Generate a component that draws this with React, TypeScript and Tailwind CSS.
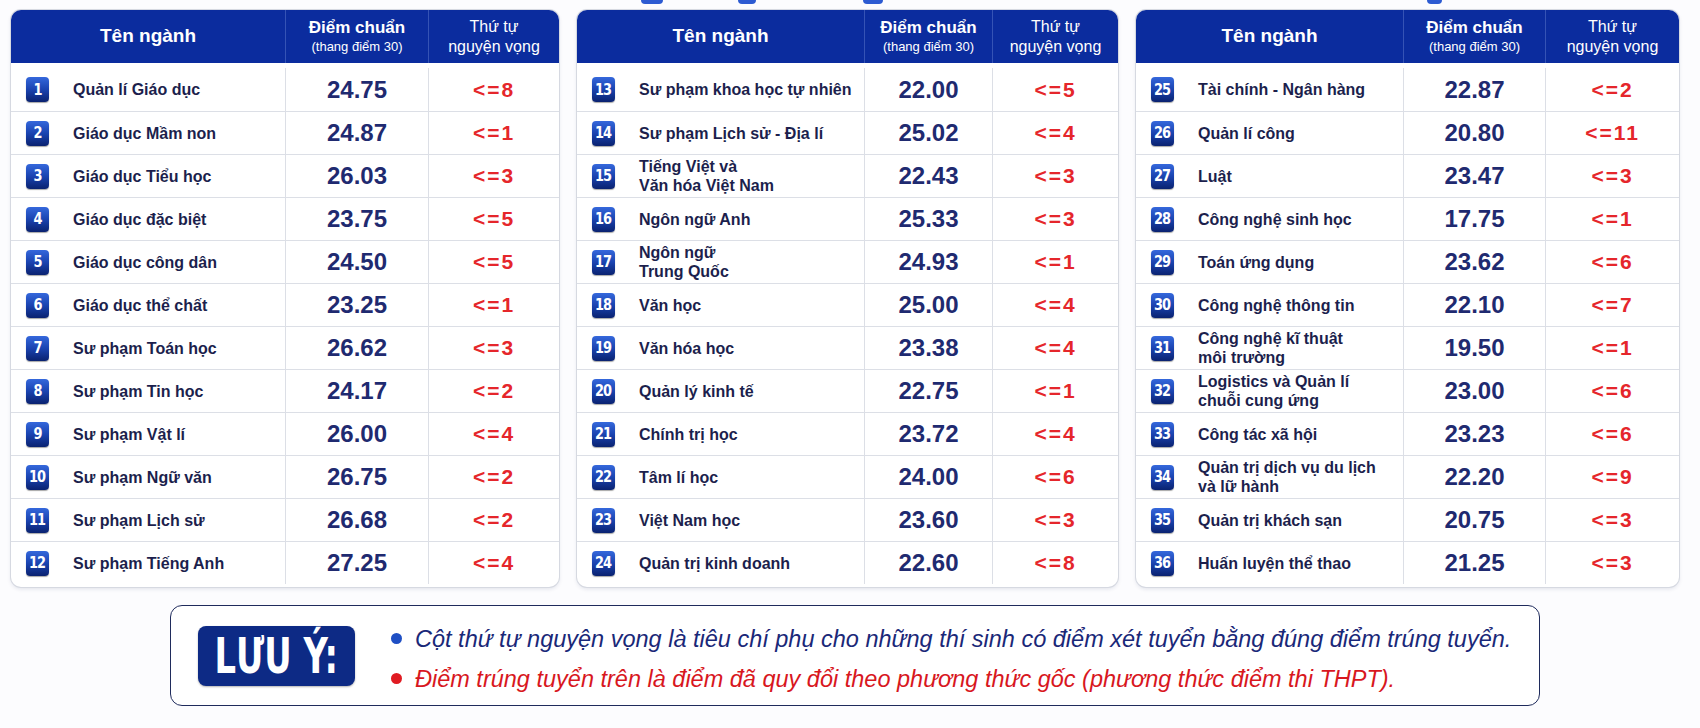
import React from "react";

type Row = { no: number; name: string[]; score: string; order: number };

const table1: Row[] = [
  { no: 1, name: ["Quản lí Giáo dục"], score: "24.75", order: 8 },
  { no: 2, name: ["Giáo dục Mầm non"], score: "24.87", order: 1 },
  { no: 3, name: ["Giáo dục Tiểu học"], score: "26.03", order: 3 },
  { no: 4, name: ["Giáo dục đặc biệt"], score: "23.75", order: 5 },
  { no: 5, name: ["Giáo dục công dân"], score: "24.50", order: 5 },
  { no: 6, name: ["Giáo dục thể chất"], score: "23.25", order: 1 },
  { no: 7, name: ["Sư phạm Toán học"], score: "26.62", order: 3 },
  { no: 8, name: ["Sư phạm Tin học"], score: "24.17", order: 2 },
  { no: 9, name: ["Sư phạm Vật lí"], score: "26.00", order: 4 },
  { no: 10, name: ["Sư phạm Ngữ văn"], score: "26.75", order: 2 },
  { no: 11, name: ["Sư phạm Lịch sử"], score: "26.68", order: 2 },
  { no: 12, name: ["Sư phạm Tiếng Anh"], score: "27.25", order: 4 },
];

const table2: Row[] = [
  { no: 13, name: ["Sư phạm khoa học tự nhiên"], score: "22.00", order: 5 },
  { no: 14, name: ["Sư phạm Lịch sử - Địa lí"], score: "25.02", order: 4 },
  { no: 15, name: ["Tiếng Việt và", "Văn hóa Việt Nam"], score: "22.43", order: 3 },
  { no: 16, name: ["Ngôn ngữ Anh"], score: "25.33", order: 3 },
  { no: 17, name: ["Ngôn ngữ", "Trung Quốc"], score: "24.93", order: 1 },
  { no: 18, name: ["Văn học"], score: "25.00", order: 4 },
  { no: 19, name: ["Văn hóa học"], score: "23.38", order: 4 },
  { no: 20, name: ["Quản lý kinh tế"], score: "22.75", order: 1 },
  { no: 21, name: ["Chính trị học"], score: "23.72", order: 4 },
  { no: 22, name: ["Tâm lí học"], score: "24.00", order: 6 },
  { no: 23, name: ["Việt Nam học"], score: "23.60", order: 3 },
  { no: 24, name: ["Quản trị kinh doanh"], score: "22.60", order: 8 },
];

const table3: Row[] = [
  { no: 25, name: ["Tài chính - Ngân hàng"], score: "22.87", order: 2 },
  { no: 26, name: ["Quản lí công"], score: "20.80", order: 11 },
  { no: 27, name: ["Luật"], score: "23.47", order: 3 },
  { no: 28, name: ["Công nghệ sinh học"], score: "17.75", order: 1 },
  { no: 29, name: ["Toán ứng dụng"], score: "23.62", order: 6 },
  { no: 30, name: ["Công nghệ thông tin"], score: "22.10", order: 7 },
  { no: 31, name: ["Công nghệ kĩ thuật", "môi trường"], score: "19.50", order: 1 },
  { no: 32, name: ["Logistics và Quản lí", "chuỗi cung ứng"], score: "23.00", order: 6 },
  { no: 33, name: ["Công tác xã hội"], score: "23.23", order: 6 },
  { no: 34, name: ["Quản trị dịch vụ du lịch", "và lữ hành"], score: "22.20", order: 9 },
  { no: 35, name: ["Quản trị khách sạn"], score: "20.75", order: 3 },
  { no: 36, name: ["Huấn luyện thể thao"], score: "21.25", order: 3 },
];

// column widths differ a bit between the three tables
const layouts = [
  { table: "w-[548px]", name: "w-[275px]", score: "w-[143px]" },
  { table: "w-[541px]", name: "w-[288px]", score: "w-[128px]" },
  { table: "w-[543px]", name: "w-[268px]", score: "w-[142px]" },
];

function NumberBadge({ no }: { no: number }) {
  return (
    <div className="w-[23px] h-[25px] shrink-0 rounded-[4px] bg-linear-to-b from-[#3568dc] via-[#1a43b0] to-[#0a2270] shadow-[0_1px_1px_rgba(0,0,0,0.35)] flex items-center justify-center">
      <span className="font-['DejaVu_Sans_Condensed',sans-serif] font-bold text-white text-[16px] leading-none tracking-[-1px] scale-x-90">
        {no}
      </span>
    </div>
  );
}

function ScoreTable({ rows, layout }: { rows: Row[]; layout: (typeof layouts)[number] }) {
  return (
    <div className={`${layout.table} rounded-[10px] bg-white overflow-hidden shadow-[0_0_0_1px_#d6d9e1,0_2px_4px_rgba(20,30,80,0.12)]`}>
      {/* Header */}
      <div className="flex h-[53px] bg-[#0b2c9e] text-white">
        <div className={`${layout.name} flex items-center justify-center border-r border-[#3553b5] text-[19px] font-bold`}>
          Tên ngành
        </div>
        <div className={`${layout.score} flex flex-col items-center justify-center border-r border-[#3553b5]`}>
          <span className="text-[17px] font-bold leading-[21px]">Điểm chuẩn</span>
          <span className="text-[13px] leading-[18px]">(thang điểm 30)</span>
        </div>
        <div className="flex-1 flex flex-col items-center justify-center">
          <span className="text-[16px] leading-[21px]">Thứ tự</span>
          <span className="text-[16px] leading-[20px]">nguyện vọng</span>
        </div>
      </div>

      {/* Rows */}
      {rows.map((r, i) => {
        const first = i === 0;
        const last = i === rows.length - 1;
        const h = first ? "h-[48px] pt-[5px]" : last ? "h-[46px] pb-[3px] border-t" : "h-[43px] border-t";
        return (
          <div key={r.no} className={`flex ${h} border-[#dcdfe6]`}>
            <div className={`${layout.name} flex items-center pl-[15px] border-r border-[#dcdfe6]`}>
              <NumberBadge no={r.no} />
              <div className="ml-[24px] text-[16px] font-bold text-[#1c1f4d] leading-[19px] whitespace-nowrap">
                {r.name.map((line) => (
                  <div key={line}>{line}</div>
                ))}
              </div>
            </div>
            <div className={`${layout.score} flex items-center justify-center border-r border-[#dcdfe6] text-[24px] font-bold text-[#1f2a70]`}>
              {r.score}
            </div>
            <div className="flex-1 flex items-center justify-center text-[21px] font-bold text-[#e5262b] tracking-[2px]">
              {"<=" + r.order}
            </div>
          </div>
        );
      })}
    </div>
  );
}

export default function App() {
  return (
    <div className="relative w-[1700px] h-[728px] overflow-hidden bg-[#fcfcfe] font-['Liberation_Sans',Arial,sans-serif]">
      {/* remnants of the heading cut off above */}
      <div className="absolute top-0 left-[641px] w-[22px] h-[4px] rounded-b-full bg-[#2d5bd2]" />
      <div className="absolute top-0 left-[738px] w-[18px] h-[4px] rounded-b-full bg-[#2d5bd2]" />
      <div className="absolute top-0 left-[863px] w-[20px] h-[4px] rounded-b-full bg-[#2d5bd2]" />
      <div className="absolute top-0 left-[1427px] w-[15px] h-[4px] rounded-b-full bg-[#2d5bd2]" />

      <div className="flex gap-[18px] pl-[11px] pt-[10px]">
        <ScoreTable rows={table1} layout={layouts[0]} />
        <ScoreTable rows={table2} layout={layouts[1]} />
        <ScoreTable rows={table3} layout={layouts[2]} />
      </div>

      {/* Note */}
      <div className="ml-[170px] mt-[18px] w-[1370px] h-[101px] rounded-[12px] border-[1.5px] border-[#1f2b5c] bg-white flex items-center">
        <div className="ml-[27px] w-[157px] h-[60px] rounded-[8px] bg-[#0d2a85] flex items-center justify-center shadow-[0_1px_2px_rgba(0,0,0,0.3)]">
          <span className="font-['DejaVu_Sans_Condensed',sans-serif] font-bold text-white text-[50px] leading-none scale-x-75 whitespace-nowrap">
            LƯU Ý:
          </span>
        </div>
        <div className="ml-[36px] flex flex-col gap-[10px] pt-[6px] italic text-[23.5px] leading-[30px]">
          <div className="flex items-center">
            <span className="w-[11px] h-[11px] rounded-full bg-[#1f4fc4]" />
            <span className="ml-[13px] text-[#1a2878]">
              Cột thứ tự nguyện vọng là tiêu chí phụ cho những thí sinh có điểm xét tuyển bằng đúng điểm trúng tuyển.
            </span>
          </div>
          <div className="flex items-center">
            <span className="w-[11px] h-[11px] rounded-full bg-[#e01b22]" />
            <span className="ml-[13px] text-[#d8171e]">
              Điểm trúng tuyển trên là điểm đã quy đổi theo phương thức gốc (phương thức điểm thi THPT).
            </span>
          </div>
        </div>
      </div>
    </div>
  );
}
